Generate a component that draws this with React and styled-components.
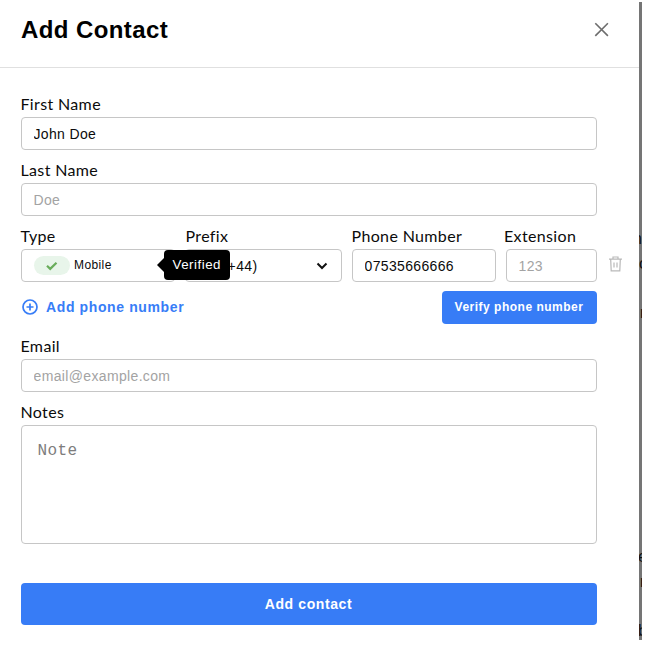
import React from 'react';
import styled, { createGlobalStyle } from 'styled-components';

const GlobalStyle = createGlobalStyle`
  *, *::before, *::after {
    box-sizing: border-box;
  }

  body {
    margin: 0;
    background: #fff;
    color: #0b0b0b;
    font-family: 'Liberation Sans', Arial, sans-serif;
    letter-spacing: 0.4px;
  }

  input, textarea, button {
    font: inherit;
    letter-spacing: inherit;
    color: inherit;
  }
`;

const StyledPage = styled.div`
  display: flex;
  width: 650px;
  height: 654px;
  overflow: hidden;
`;

const StyledModal = styled.main`
  width: 639px;
  flex-shrink: 0;
`;

const StyledBackdrop = styled.aside`
  width: 3px;
  height: 638px;
  margin-top: 2px;
  padding-top: 225px;
  overflow: hidden;
  background: #757575;
  color: #111;
  font-size: 16px;
`;

const StyledBackdropText = styled.div`
  height: ${({ height }) => height}px;
  margin-left: ${({ shift }) => shift}px;
  line-height: 24px;
`;

const StyledHeader = styled.header`
  display: flex;
  align-items: center;
  justify-content: space-between;
  height: 68px;
  padding: 0 30px 8px 21px;
  border-bottom: 1px solid #e0e0e0;
`;

const StyledTitle = styled.h1`
  margin: 0;
  color: #000;
  font-size: 24px;
  line-height: 30px;
`;

const IconButton = styled.button`
  display: flex;
  padding: 0;
  border: 0;
  background: none;
`;

const StyledForm = styled.form`
  width: 576px;
  margin: 16px 0 0 21px;
`;

const StyledField = styled.div`
  width: ${({ width }) => (width ? `${width}px` : 'auto')};
  flex-shrink: 0;
`;

const StyledLabel = styled.label`
  display: block;
  height: 33px;
  padding-top: 8px;
  margin-left: ${({ shift }) => shift || -0.5}px;
  font-family: Lato, sans-serif;
  font-size: 16px;
  line-height: 23px;
  letter-spacing: 0.35px;
  white-space: nowrap;
`;

const StyledInput = styled.input`
  display: block;
  width: 100%;
  height: 33px;
  padding: 1px 11.5px 0;
  border: 1px solid #c6c6c6;
  border-radius: 4px;
  outline: 0;
  background: #fff;
  font-size: 14px;
  letter-spacing: 0.35px;

  &::placeholder {
    color: #a3a3a3;
    opacity: 1;
  }
`;

const StyledTextarea = styled.textarea`
  display: block;
  width: 100%;
  height: 119px;
  padding: 16px 15.5px;
  border: 1px solid #c6c6c6;
  border-radius: 4px;
  outline: 0;
  resize: none;
  font-family: 'Liberation Mono', monospace;
  font-size: 16px;
  line-height: 18px;

  &::placeholder {
    color: #7d7d7d;
    opacity: 1;
  }
`;

const StyledPhoneRow = styled.div`
  display: flex;
  align-items: flex-end;
  gap: 10px;
`;

const StyledSelect = styled.div`
  position: relative;
  display: flex;
  align-items: center;
  justify-content: space-between;
  height: 33px;
  padding: 0 13px 0 12px;
  border: 1px solid #c6c6c6;
  border-radius: 4px;
  font-size: 14px;
`;

const StyledType = styled.span`
  display: flex;
  align-items: center;
  gap: 4px;
  font-size: 12px;
  line-height: 16px;

  span {
    margin-top: -2px;
  }
`;

const StyledBadge = styled.div`
  display: flex;
  align-items: center;
  justify-content: center;
  width: 36px;
  height: 19px;
  border-radius: 10px;
  background: #e8f5ea;
`;

const StyledTooltip = styled.div`
  position: absolute;
  z-index: 1;
  top: 0;
  left: 142px;
  width: 65.5px;
  height: 30px;
  border-radius: 4px;
  background: #000;
  color: #fff;
  font-size: 13.33px;
  line-height: 30px;
  letter-spacing: 0.5px;
  text-align: center;

  &::before {
    content: '';
    position: absolute;
    top: 8px;
    left: -7px;
    border: solid transparent;
    border-width: 7px 7px 7px 0;
    border-right-color: #000;
  }
`;

const DeleteButton = styled(IconButton)`
  margin: 0 0 10px 2px;
`;

const StyledActions = styled.div`
  display: flex;
  align-items: flex-start;
  justify-content: space-between;
  height: 44px;
  padding-top: 9px;
`;

const AddPhoneButton = styled(IconButton)`
  align-items: center;
  gap: 8px;
  height: 31px;
  padding-left: 1px;
  color: #377df7;
  font-size: 14px;
  font-weight: 700;
  letter-spacing: 0.62px;
`;

const StyledButton = styled.button`
  width: 155px;
  height: 33px;
  padding: 0 1px 1px 0;
  border: 0;
  border-radius: 4px;
  background: #377cf6;
  color: #fff;
  font-size: 12px;
  font-weight: 700;
  letter-spacing: 0.5px;
  white-space: nowrap;
`;

const SubmitButton = styled(StyledButton)`
  display: block;
  width: 100%;
  height: 42px;
  margin-top: 39px;
  font-size: 14px;
  letter-spacing: 0.6px;
`;

const Field = ({ label, width, shift, children }) => (
  <StyledField width={width}>
    <StyledLabel shift={shift}>{label}</StyledLabel>
    {children}
  </StyledField>
);

const CloseIcon = () => (
  <svg width="15" height="15" viewBox="0 0 15 15" fill="none" stroke="#6d6d6d" strokeWidth="1.6">
    <path d="M1.3 1.3l12.6 12.6M13.9 1.3L1.3 13.9" />
  </svg>
);

const CheckIcon = () => (
  <svg width="12" height="10" viewBox="0 0 12 10" fill="none" stroke="#69ad5b" strokeWidth="2.2">
    <path d="M1 4.8l3.2 3.1L10.5 1.7" />
  </svg>
);

const ChevronIcon = () => (
  <svg width="12" height="8" viewBox="0 0 12 8" fill="none" stroke="#111" strokeWidth="2">
    <path d="M1.5 1.5L6 6l4.5-4.5" />
  </svg>
);

const TrashIcon = () => (
  <svg width="13" height="16" viewBox="0 0 13 16" fill="none" stroke="#b9b9b9" strokeWidth="1.2">
    <path d="M0 3.2h13M4 3V1h5v2M1.7 3.4l.5 11.4h8.6l.5-11.4M5 6.5v5M8 6.5v5" />
  </svg>
);

const PlusIcon = () => (
  <svg width="16" height="16" viewBox="0 0 16 16" fill="none" stroke="#377df7" strokeWidth="1.7">
    <circle cx="8" cy="8" r="7" />
    <path d="M8 4.5v7M4.5 8h7" />
  </svg>
);

const App = () => (
  <>
    <GlobalStyle />
    <StyledPage>
      <StyledModal>
        <StyledHeader>
          <StyledTitle>Add Contact</StyledTitle>
          <IconButton type="button" aria-label="Close">
            <CloseIcon />
          </IconButton>
        </StyledHeader>
        <StyledForm>
          <Field label="First Name">
            <StyledInput defaultValue="John Doe" />
          </Field>
          <Field label="Last Name">
            <StyledInput placeholder="Doe" />
          </Field>
          <StyledPhoneRow>
            <Field label="Type" width={154}>
              <StyledSelect>
                <StyledType>
                  <StyledBadge>
                    <CheckIcon />
                  </StyledBadge>
                  <span>Mobile</span>
                </StyledType>
                <StyledTooltip>Verified</StyledTooltip>
              </StyledSelect>
            </Field>
            <Field label="Prefix" width={157} shift={0.5}>
              <StyledSelect>
                <span>UK (+44)</span>
                <ChevronIcon />
              </StyledSelect>
            </Field>
            <Field label="Phone Number" width={144}>
              <StyledInput defaultValue="07535666666" />
            </Field>
            <Field label="Extension" width={91} shift={-2}>
              <StyledInput placeholder="123" />
            </Field>
            <DeleteButton type="button" aria-label="Delete">
              <TrashIcon />
            </DeleteButton>
          </StyledPhoneRow>
          <StyledActions>
            <AddPhoneButton type="button">
              <PlusIcon />
              Add phone number
            </AddPhoneButton>
            <StyledButton type="button">Verify phone number</StyledButton>
          </StyledActions>
          <Field label="Email">
            <StyledInput placeholder="email@example.com" />
          </Field>
          <Field label="Notes">
            <StyledTextarea placeholder="Note" />
          </Field>
          <SubmitButton type="button">Add contact</SubmitButton>
        </StyledForm>
      </StyledModal>
      <StyledBackdrop aria-hidden="true">
        <StyledBackdropText height={25} shift={-6}>n</StyledBackdropText>
        <StyledBackdropText height={49} shift={0}>o</StyledBackdropText>
        <StyledBackdropText height={244} shift={1}>r</StyledBackdropText>
        <StyledBackdropText height={25} shift={-1}>e</StyledBackdropText>
        <StyledBackdropText height={49} shift={1}>r</StyledBackdropText>
        <StyledBackdropText height={20} shift={-1}>b</StyledBackdropText>
      </StyledBackdrop>
    </StyledPage>
  </>
);

export default App;
